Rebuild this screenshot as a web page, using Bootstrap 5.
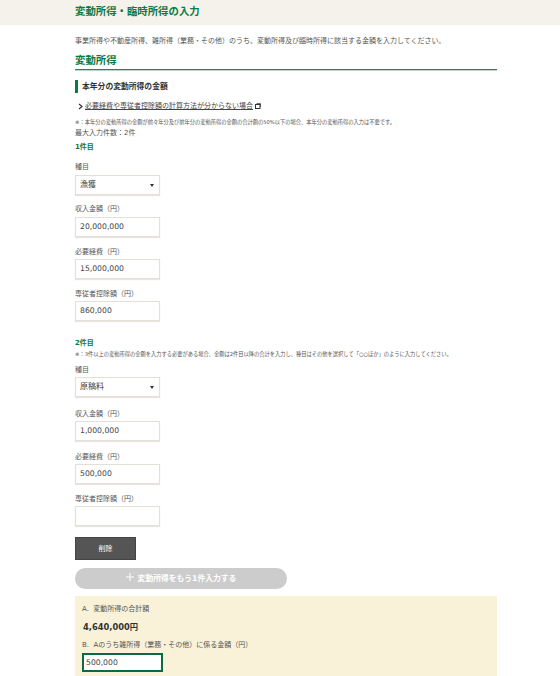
<!DOCTYPE html>
<html lang="ja"><head><meta charset="utf-8">
<link rel="stylesheet" href="https://cdn.jsdelivr.net/npm/bootstrap@5.3.0/dist/css/bootstrap.min.css">
<style>
html,body{height:676px;overflow:hidden}
body{font-family:"DejaVu Sans","Noto Sans CJK JP",sans-serif;color:#555;font-size:7px;background:#fff}
.hdrbar{background:#f5f2eb;height:25px}
.wrap{width:422px;margin-left:75px}
.hdrbar .wrap{font-size:10.4px;font-weight:700;color:#0b7a45;line-height:22px}
.intro{margin:10px 0 0;line-height:12px}
.sec{font-size:10.4px;font-weight:700;color:#0b7a45;line-height:16px;margin-top:5px;border-bottom:1px solid #2f7f5e;box-shadow:0 1px 0 #b6d8c8;height:18px}
.sub{margin-top:10px;border-left:3px solid #0b7a45;padding-left:4px;font-weight:700;font-size:7.8px;line-height:13px;color:#333}
.lnk{margin-top:7px;line-height:12px;padding-left:3px}
.lnk u{color:#444}
.lnk svg:first-child{margin-right:2px}
.lnk svg:last-child{margin-left:2px}
.note{font-size:5.25px;line-height:8px;color:#555}
.n1{margin-top:6px}
.cnt{line-height:12px;margin-top:1px}
.num{font-weight:700;color:#0b7a45;line-height:10px;margin-top:3px}
.n2{margin-top:17px}
.nt2{margin-top:2px}
.lab{line-height:12px;margin-bottom:2px}
.lab.lx{padding-top:1px;margin-bottom:1px}
.l1{margin-top:9px}
.l2{margin-top:5px}
.fld{width:85px;height:20px;border:1px solid #e3e0d8;box-shadow:0 1px 1px #e9e6df;padding:0 4px;font-size:7.7px;line-height:18px;color:#444;background:#fff}
.fld.sel{position:relative;font-size:8px}
.fld.sel::after{content:"";position:absolute;right:5px;top:8px;border:2px solid transparent;border-top:3px solid #333;border-bottom:0}
.grp{margin-bottom:8px}
.g2{margin-bottom:10px}
.g3{margin-bottom:9px}
.delbtn{width:61px;height:23px;background:#555;color:#fff;line-height:22px;text-align:center;border:1px solid #444;margin-top:11px}
.addbtn{width:212px;height:21px;margin-top:8px;border-radius:11px;background:#ccc;color:#fff;font-weight:700;font-size:7.8px;line-height:21px;text-align:center}
.sumbox{margin-top:7px;background:#f9f2d9;padding:7px 7px 0;height:85px}
.amt{font-weight:700;font-size:8.3px;line-height:12px;margin:6px 0 0 1px;color:#333}
.lb{margin:6px 0 2px}
.fld.act{border:2px solid #0b6b42;width:81px;height:19px;box-shadow:none;line-height:15px;padding:0 2px}
</style></head><body>
<div class="hdrbar"><div class="wrap">変動所得・臨時所得の入力</div></div>
<div class="wrap">
<p class="intro">事業所得や不動産所得、雑所得（業務・その他）のうち、変動所得及び臨時所得に該当する金額を入力してください。</p>
<div class="sec">変動所得</div>
<div class="sub">本年分の変動所得の金額</div>
<div class="lnk d-flex align-items-center"><svg width="5" height="7" viewBox="0 0 5 7"><path d="M1 1l3 2.5L1 6" fill="none" stroke="#333" stroke-width="1.2"/></svg><u>必要経費や専従者控除額の計算方法が分からない場合</u><svg width="6" height="6" viewBox="0 0 6 6"><rect x=".5" y="1.5" width="4.5" height="4" fill="none" stroke="#333"/><path d="M1.5.5H5.5V4" fill="none" stroke="#333" stroke-width=".7"/></svg></div>
<div class="note n1">※：本年分の変動所得の金額が前々年分及び前年分の変動所得の金額の合計額の50%以下の場合、本年分の変動所得の入力は不要です。</div>
<div class="cnt">最大入力件数：2件</div>
<div class="num">1件目</div>
<div class="lab l1">種目</div>
<div class="grp"><div class="fld sel">漁獲</div></div>
<div class="lab">収入金額（円）</div>
<div class="grp"><div class="fld">20,000,000</div></div>
<div class="lab lx">必要経費（円）</div>
<div class="grp"><div class="fld">15,000,000</div></div>
<div class="lab lx">専従者控除額（円）</div>
<div class="grp"><div class="fld">860,000</div></div>
<div class="num n2">2件目</div>
<div class="note nt2">※：3件以上の変動所得の金額を入力する必要がある場合、金額は2件目以降の合計を入力し、種目はその他を選択して「○○ほか」のように入力してください。</div>
<div class="lab l2 lx">種目</div>
<div class="grp g2"><div class="fld sel">原稿料</div></div>
<div class="lab lx">収入金額（円）</div>
<div class="grp g3"><div class="fld">1,000,000</div></div>
<div class="lab lx">必要経費（円）</div>
<div class="grp"><div class="fld">500,000</div></div>
<div class="lab lx">専従者控除額（円）</div>
<div class="grp mb-0"><div class="fld"></div></div>
<div class="delbtn">削除</div>
<div class="addbtn"><svg width="8" height="8" viewBox="0 0 8 8" class="me-1 align-baseline"><path d="M4 0v8M0 4h8" stroke="#fff"/></svg>変動所得をもう1件入力する</div>
<div class="sumbox">
<div class="lab m-0">A.&nbsp;&nbsp;変動所得の合計額</div>
<div class="amt">4,640,000円</div>
<div class="lab lb">B.&nbsp;&nbsp;Aのうち雑所得（業務・その他）に係る金額（円）</div>
<div class="fld act">500,000</div>
</div>
</div>
</body></html>
